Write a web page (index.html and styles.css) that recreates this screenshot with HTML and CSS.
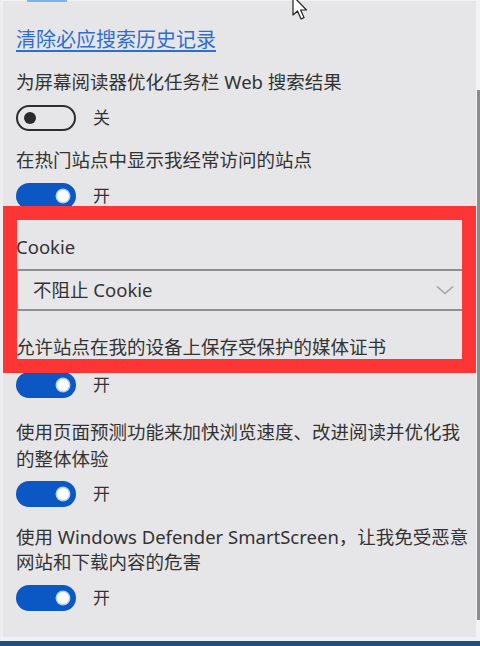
FILE: index.html
```html
<!DOCTYPE html>
<html lang="zh-CN">
<head>
<meta charset="utf-8">
<title>设置</title>
<link rel="stylesheet" href="styles.css">
</head>
<body>
<div class="window">
  <div class="main">
    <div class="content">
      <div class="top-btn"></div>
      <a class="link" href="#">清除必应搜索历史记录</a>

      <div class="label l1">为屏幕阅读器优化任务栏 Web 搜索结果</div>
      <div class="toggle-row">
        <span class="toggle off"><span class="knob"></span></span>
        <span class="state">关</span>
      </div>

      <div class="label l2">在热门站点中显示我经常访问的站点</div>
      <div class="toggle-row">
        <span class="toggle on"><span class="knob"></span></span>
        <span class="state">开</span>
      </div>

      <div class="label cookie">Cookie</div>
      <div class="select">
        <span class="select-text">不阻止 Cookie</span>
        <svg class="chev" width="18" height="10" viewBox="0 0 18 10"><path d="M1 1.5 L9 8.5 L17 1.5" fill="none" stroke="#a3a3a3" stroke-width="1.6"/></svg>
      </div>

      <div class="label l3">允许站点在我的设备上保存受保护的媒体证书</div>
      <div class="toggle-row">
        <span class="toggle on"><span class="knob"></span></span>
        <span class="state">开</span>
      </div>

      <div class="label l4">使用页面预测功能来加快浏览速度、改进阅读并优化我的整体体验</div>
      <div class="toggle-row">
        <span class="toggle on"><span class="knob"></span></span>
        <span class="state">开</span>
      </div>

      <div class="label l5">使用 Windows Defender SmartScreen，让我免受恶意网站和下载内容的危害</div>
      <div class="toggle-row">
        <span class="toggle on"><span class="knob"></span></span>
        <span class="state">开</span>
      </div>
    </div>
    <div class="scrollbar"><div class="thumb"></div></div>
  </div>
  <div class="bottom-light"></div>
  <div class="bottom-dark"></div>

  <div class="highlight"></div>
  <svg class="cursor" width="20" height="30" viewBox="0 0 20 30">
    <path d="M1 0 L1 19 L5.5 15 L9 23 L12 21.6 L8.6 14 L14.5 14 Z" fill="#fff" stroke="#222" stroke-width="1.2" stroke-linejoin="round"/>
  </svg>
</div>
</body>
</html>
```

FILE: styles.css
```css
* { box-sizing: border-box; }
html, body { margin: 0; padding: 0; }
body {
  background: #e6e6e8;
  font-family: "Noto Sans", "Noto Sans CJK SC", sans-serif;
  color: #333;
}
.window {
  position: relative;
  width: 480px;
  height: 646px;
  overflow: hidden;
  display: flex;
  flex-direction: column;
  background: #e6e6e8;
}
.main {
  flex: 1;
  display: flex;
  border-left: 3px solid #eeeef0;
  border-top: 1px solid #f2f2f4;
  min-height: 0;
}
.content {
  flex: 1;
  padding: 0 4px 0 13px;
  min-width: 0;
}
.top-btn {
  width: 40px;
  height: 2px;
  margin-left: 11px;
  background: #7fb2ec;
  margin-top: -1px;
}
.link {
  display: block;
  margin-top: 25px;
  font-size: 20px;
  line-height: 26px;
  color: #2e6ed0;
  text-decoration: underline;
  text-underline-offset: 3px;
  width: max-content;
}
.label {
  font-size: 18.5px;
  line-height: 26px;
  color: #333;
}
.l1 { margin-top: 16px; }
.l2 { margin-top: 16px; }
.cookie { margin-top: 25px; }
.l3 { margin-top: 23px; }
.l4 { margin-top: 21px; line-height: 26.5px; }
.l5 { margin-top: 17px; line-height: 25px; }

.toggle-row {
  display: flex;
  align-items: center;
  gap: 17px;
  margin-top: 10px;
  height: 26px;
}
.l4 + .toggle-row { margin-top: 9px; }
.l5 + .toggle-row { margin-top: 11px; }
.l3 + .toggle-row { margin-top: 12px; }
.state {
  font-size: 17px;
  line-height: 26px;
  color: #333;
}
.toggle {
  position: relative;
  display: flex;
  align-items: center;
  width: 60px;
  height: 26px;
  border-radius: 13px;
  padding: 0 7px;
}
.toggle.on {
  background: #0b57c4;
  justify-content: flex-end;
}
.toggle.off {
  border: 2px solid #2e2e2e;
  justify-content: flex-start;
  padding: 0 6px;
}
.knob {
  width: 12px;
  height: 12px;
  border-radius: 50%;
}
.toggle.on .knob {
  background: #fff;
  box-shadow: 0 0 0 1.5px #a8d0f6;
}
.toggle.off .knob {
  background: #2a2a2a;
}

.select {
  margin-top: 9px;
  height: 42px;
  border: 2px solid #8e8e90;
  display: flex;
  align-items: center;
  justify-content: space-between;
  padding: 0 17px 0 15px;
  background: #e7e7e9;
}
.select-text {
  font-size: 18.5px;
  line-height: 26px;
  color: #333;
}
.chev { display: block; margin-right: -1px; }

.scrollbar {
  width: 4px;
  background: #f3f3f5;
  padding-top: 89px;
}
.thumb {
  margin-left: 1px;
  width: 3px;
  height: 530px;
  background: #8c8c8e;
}
.bottom-light {
  height: 4px;
  background: #eef2f8;
}
.bottom-dark {
  height: 5px;
  background: #1f4e80;
}

.highlight {
  position: absolute;
  left: 3px;
  top: 206px;
  width: 473px;
  height: 167px;
  border: 14px solid #fd3535;
  pointer-events: none;
}
.cursor {
  position: absolute;
  left: 292px;
  top: -4px;
}
```
